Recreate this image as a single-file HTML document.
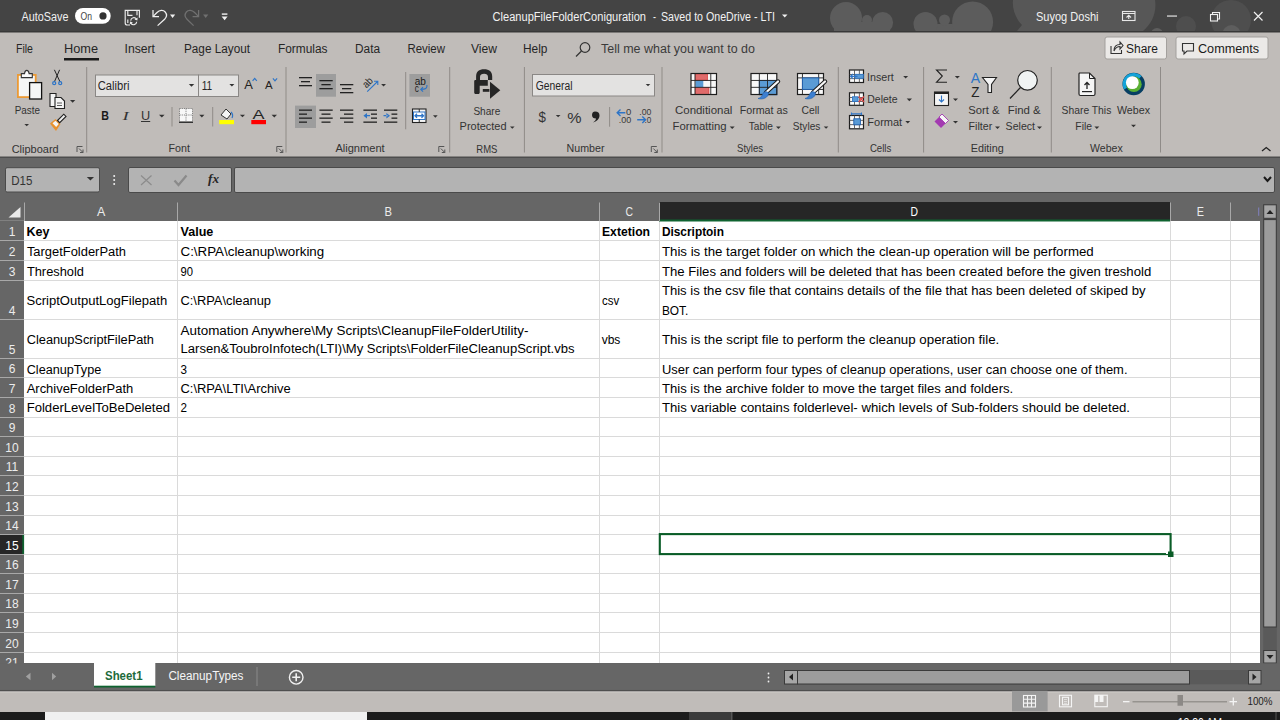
<!DOCTYPE html>
<html><head><meta charset="utf-8"><style>
html,body{margin:0;padding:0;width:1280px;height:720px;overflow:hidden;background:#666;}
svg{display:block;}
text{font-family:"Liberation Sans",sans-serif;white-space:pre;}
</style></head><body>
<svg width="1280" height="720" viewBox="0 0 1280 720" font-family="Liberation Sans, sans-serif">
<rect x="0" y="0" width="1280" height="32" fill="#444444"/>
<rect x="0" y="32" width="1280" height="125" fill="#c0bcb9"/>
<rect x="0" y="156.5" width="1280" height="1.5" fill="#4d4d4d"/>
<rect x="0" y="158" width="1280" height="505" fill="#666666"/>
<rect x="0" y="689.5" width="1280" height="2" fill="#4f4f4f"/>
<rect x="0" y="691.5" width="1280" height="20.5" fill="#c0bcb9"/>
<rect x="0" y="691.5" width="1280" height="1.3" fill="#c9c6c3"/>
<rect x="0" y="712" width="1280" height="8" fill="#1c1c1c"/>
<clipPath id="tb"><rect x="0" y="0" width="1280" height="31"/></clipPath>
<g clip-path="url(#tb)">
<g fill="#5c5c5c">
<circle cx="846" cy="18" r="16"/><circle cx="867" cy="20" r="5"/><circle cx="882.6" cy="22.5" r="10.5"/>
<rect x="834" y="22" width="56" height="10"/><rect x="918" y="24" width="70" height="8"/><circle cx="925.5" cy="24" r="12"/><circle cx="944.5" cy="20" r="5.5"/><circle cx="972.6" cy="22" r="20.5"/>
</g>
<path d="M1013 0 H1155 C1157 12 1152 24 1143 31 H1017 L1022 25 C1015 18 1012 8 1013 0 Z" fill="#575757"/>
<g fill="#4e4e4e"><circle cx="1186" cy="26" r="10"/><circle cx="1231" cy="20" r="20"/></g>
<g fill="#5e5e5e"><circle cx="1231.5" cy="34" r="9"/><circle cx="1157" cy="34" r="6"/></g>
</g>
<rect x="0" y="0" width="812" height="32" fill="#444444"/>
<rect x="0" y="31" width="1280" height="1.5" fill="#383838"/>
<text x="21.60" y="20.60" font-size="12" fill="#f0f0f0" font-weight="normal" textLength="46.90" lengthAdjust="spacingAndGlyphs">AutoSave</text>
<rect x="75" y="8" width="35.7" height="15.8" rx="7.9" fill="#ffffff"/>
<text x="80.50" y="19.80" font-size="10" fill="#444444" font-weight="normal" textLength="11.50" lengthAdjust="spacingAndGlyphs">On</text>
<circle cx="103" cy="15.9" r="3.6" fill="#333333"/>
<g fill="none" stroke="#ececec" stroke-width="1.15">
<path d="M139.4 17.8 V10.3 H125.2 V23 C125.2 24.2 126 25 127.2 25 H130"/>
<path d="M127.8 10.3 V15.3 H132.5 M137 10.3 V15.3"/>
<path d="M127.8 19.5 V23"/>
<path d="M130.7 20.6 A3.1 3.1 0 0 1 136.5 19.3 M136.7 21.8 A3.1 3.1 0 0 1 130.9 23.1"/>
</g>
<path d="M137.6 17.4 L137.4 20.4 L134.5 19.6 Z M129.8 24.6 L130 21.6 L132.9 22.4 Z" fill="#ececec"/>
<g fill="none" stroke="#f0f0f0" stroke-width="1.25" stroke-linejoin="miter">
<path d="M153 10 V16.5 H159"/>
<path d="M153.4 16.1 L157 12.5 C159.5 10 163.2 9.6 165.2 12 C167.2 14.5 166.6 17.2 164.6 19.2 L157.6 25.6"/>
</g>
<path d="M170 14.6 L175.2 14.6 L172.6 17.9 Z" fill="#f0f0f0"/>
<g fill="none" stroke="#707070" stroke-width="1.25">
<path d="M198.6 10 V16.5 H192.6"/>
<path d="M198.2 16.1 L194.6 12.5 C192.1 10 188.4 9.6 186.4 12 C184.4 14.5 185 17.2 187 19.2 L193.6 25.6"/>
</g>
<path d="M203.1 14.6 L208.3 14.6 L205.7 17.9 Z" fill="#707070"/>
<rect x="221.8" y="13.4" width="5.6" height="1.4" fill="#f0f0f0"/>
<path d="M221.6 16.6 L227.6 16.6 L224.6 20.2 Z" fill="#f0f0f0"/>
<text x="492.50" y="20.50" font-size="12.5" fill="#f2f2f2" font-weight="normal" textLength="153.50" lengthAdjust="spacingAndGlyphs">CleanupFileFolderConiguration</text>
<text x="653.00" y="20.50" font-size="12.5" fill="#f2f2f2" font-weight="normal" textLength="3.00" lengthAdjust="spacingAndGlyphs">-</text>
<text x="661.00" y="20.50" font-size="12.5" fill="#f2f2f2" font-weight="normal" textLength="114.00" lengthAdjust="spacingAndGlyphs">Saved to OneDrive - LTI</text>
<path d="M782 14.5 L787.5 14.5 L784.75 17.5 Z" fill="#f2f2f2"/>
<text x="1036.00" y="20.80" font-size="12.5" fill="#f2f2f2" font-weight="normal" textLength="62.50" lengthAdjust="spacingAndGlyphs">Suyog Doshi</text>
<g fill="none" stroke="#e8e8e8" stroke-width="1.1">
<rect x="1122.5" y="11.5" width="12.5" height="9"/>
<path d="M1122.5 13.5 H1135 M1128.75 19 V15.5 M1126.5 17.5 L1128.75 15.2 L1131 17.5"/>
</g>
<rect x="1167" y="15.5" width="10" height="1.1" fill="#f0f0f0"/>
<g fill="none" stroke="#f0f0f0" stroke-width="1.1"><rect x="1210.5" y="14.5" width="7" height="6.5"/><path d="M1212.5 14.5 V12.5 H1219.5 V19 H1217.5"/></g>
<path d="M1254 12 L1262.5 20.5 M1262.5 12 L1254 20.5" stroke="#f0f0f0" stroke-width="1.2"/>
<text x="16.00" y="53.00" font-size="12.5" fill="#262626" font-weight="normal" textLength="17.00" lengthAdjust="spacingAndGlyphs">File</text>
<text x="64.00" y="53.00" font-size="12.5" fill="#262626" font-weight="normal" textLength="34.00" lengthAdjust="spacingAndGlyphs">Home</text>
<rect x="64" y="58" width="35" height="2.5" fill="#1a1a1a"/>
<text x="124.50" y="53.00" font-size="12.5" fill="#262626" font-weight="normal" textLength="30.50" lengthAdjust="spacingAndGlyphs">Insert</text>
<text x="184.00" y="53.00" font-size="12.5" fill="#262626" font-weight="normal" textLength="66.00" lengthAdjust="spacingAndGlyphs">Page Layout</text>
<text x="278.00" y="53.00" font-size="12.5" fill="#262626" font-weight="normal" textLength="49.50" lengthAdjust="spacingAndGlyphs">Formulas</text>
<text x="355.00" y="53.00" font-size="12.5" fill="#262626" font-weight="normal" textLength="25.00" lengthAdjust="spacingAndGlyphs">Data</text>
<text x="407.50" y="53.00" font-size="12.5" fill="#262626" font-weight="normal" textLength="37.50" lengthAdjust="spacingAndGlyphs">Review</text>
<text x="471.00" y="53.00" font-size="12.5" fill="#262626" font-weight="normal" textLength="26.00" lengthAdjust="spacingAndGlyphs">View</text>
<text x="523.00" y="53.00" font-size="12.5" fill="#262626" font-weight="normal" textLength="24.50" lengthAdjust="spacingAndGlyphs">Help</text>
<g fill="none" stroke="#333" stroke-width="1.2"><circle cx="585" cy="47.5" r="4.8"/><path d="M581.5 51 L576 56.5"/></g>
<text x="601.00" y="53.00" font-size="12.5" fill="#3a3a3a" font-weight="normal" textLength="154.00" lengthAdjust="spacingAndGlyphs">Tell me what you want to do</text>
<rect x="1105" y="37" width="61.5" height="22" rx="2" fill="#ebe9e7" stroke="#a3a09d" stroke-width="1"/>
<rect x="1176" y="37" width="92" height="22" rx="2" fill="#ebe9e7" stroke="#a3a09d" stroke-width="1"/>
<g fill="none" stroke="#333" stroke-width="1.1"><path d="M1111 46 V53.5 H1121.5 V50"/><path d="M1114 51 C1114 46 1117 44.5 1120 44.5 V42 L1123 45.5 L1120 49 V46.5 C1118 46.5 1115.5 47.5 1114 51"/></g>
<text x="1126.00" y="53.00" font-size="12.5" fill="#1a1a1a" font-weight="normal" textLength="32.00" lengthAdjust="spacingAndGlyphs">Share</text>
<path d="M1182.5 43.5 H1193.5 V51 H1187 L1184 54 V51 H1182.5 Z" fill="none" stroke="#333" stroke-width="1.1"/>
<text x="1198.00" y="53.00" font-size="12.5" fill="#1a1a1a" font-weight="normal" textLength="61.00" lengthAdjust="spacingAndGlyphs">Comments</text>
<rect x="17.9" y="74.9" width="17.8" height="22.2" fill="#f5f6f6" stroke="#eb9a35" stroke-width="1.8"/>
<path d="M21.3 77.6 V73.6 H24.5 C24.8 71.2 25.9 70.4 26.8 70.4 C27.7 70.4 28.8 71.2 29.1 73.6 H32.3 V77.6 Z" fill="#fafafa" stroke="#333" stroke-width="1.1"/>
<rect x="29.6" y="82.6" width="12" height="16.4" fill="#f5f6f6" stroke="#111" stroke-width="1.3"/>
<text x="14.70" y="114.40" font-size="11.8" fill="#333333" font-weight="normal" textLength="25.30" lengthAdjust="spacingAndGlyphs">Paste</text>
<path d="M24.4 124 L29 124 L26.7 126.3 Z" fill="#333"/>
<g fill="none" stroke="#222" stroke-width="1"><path d="M54.4 69.8 L60 81.8 M59.6 69.8 L54.4 81.8"/></g>
<g fill="none" stroke="#2e75c7" stroke-width="1.3"><circle cx="54.2" cy="83.2" r="1.5"/><circle cx="60.2" cy="83.2" r="1.5"/></g>
<g fill="#f5f5f5" stroke="#222" stroke-width="1.1"><path d="M50 93.5 H56 V106.5 H50 Z"/><path d="M55 97.5 H61 L64.5 101 V108.5 H55 Z"/></g>
<path d="M57 103 H62 M57 105.5 H62" stroke="#333" stroke-width="0.8"/>
<path d="M70 100 L75.3 100 L72.65 102.65 Z" fill="#333"/>
<path d="M50 123.5 L55.5 119 L60.5 124 L56 131 Z" fill="#e8912d"/>
<path d="M52.5 123.2 L55.5 120.7 L58.7 123.9 L56.2 127 Z" fill="#f5f5f5"/>
<path d="M57.5 120.5 L63.8 114.2 L66 116.4 L59.7 122.7 Z" fill="#f0f0f0" stroke="#222" stroke-width="1.1"/>
<text x="11.70" y="152.70" font-size="11.3" fill="#333333" font-weight="normal" textLength="47.00" lengthAdjust="spacingAndGlyphs">Clipboard</text>
<g fill="none" stroke="#555" stroke-width="1"><path d="M77.0 152 V146.5 H82.5"/><path d="M79.0 148.5 L83.0 152.5 M83.0 149.5 V152.5 H80.0"/></g>
<rect x="86.2" y="67" width="1" height="85.5" fill="#8f8b88"/>
<rect x="95.5" y="75" width="103" height="21.5" fill="#e3e2e1" stroke="#8a8785" stroke-width="1"/>
<rect x="198.5" y="75" width="40" height="21.5" fill="#e3e2e1" stroke="#8a8785" stroke-width="1"/>
<text x="97.70" y="89.80" font-size="12.5" fill="#262626" font-weight="normal" textLength="31.70" lengthAdjust="spacingAndGlyphs">Calibri</text>
<path d="M188.8 84 L194.25 84 L191.525 86.725 Z" fill="#333"/>
<text x="201.75" y="89.80" font-size="12.5" fill="#262626" font-weight="normal" textLength="10.45" lengthAdjust="spacingAndGlyphs">11</text>
<path d="M229.4 84 L234.4 84 L231.9 86.5 Z" fill="#333"/>
<text x="244.20" y="89.00" font-size="13" fill="#222" font-weight="normal" textLength="8.60" lengthAdjust="spacingAndGlyphs">A</text>
<path d="M252.6 80.8 L254.7 78.4 L256.8 80.8" fill="none" stroke="#2e75c7" stroke-width="1.2"/>
<text x="265.00" y="89.00" font-size="11.5" fill="#222" font-weight="normal" textLength="7.60" lengthAdjust="spacingAndGlyphs">A</text>
<path d="M272.9 78.4 L275 80.8 L277.1 78.4" fill="none" stroke="#2e75c7" stroke-width="1.2"/>
<text x="101.30" y="120.00" font-size="12.5" fill="#1a1a1a" font-weight="bold" textLength="7.70" lengthAdjust="spacingAndGlyphs">B</text>
<text x="122.50" y="120.00" font-size="13" fill="#333" font-weight="normal" textLength="6.30" lengthAdjust="spacingAndGlyphs" style="font-family:'Liberation Serif',serif;font-style:italic">I</text>
<text x="141.00" y="120.00" font-size="12.5" fill="#333" font-weight="normal" textLength="9.20" lengthAdjust="spacingAndGlyphs">U</text>
<rect x="141" y="121" width="9.2" height="1" fill="#333"/>
<path d="M159 114.8 L164.6 114.8 L161.8 117.6 Z" fill="#333"/>
<rect x="171.5" y="107" width="1" height="19.5" fill="#8f8b88"/>
<rect x="179.5" y="108.5" width="13" height="13" fill="#f8f8f8"/>
<g stroke="#777" stroke-width="0.9" stroke-dasharray="1.2 1" fill="none"><path d="M179.5 108.5 H192.5 M179.5 108.5 V121.5 M192.5 108.5 V121.5 M179.5 115 H192.5 M186 108.5 V121.5"/></g>
<rect x="179" y="121.5" width="14" height="1.5" fill="#333"/>
<path d="M199.25 114.8 L204.4 114.8 L201.825 117.375 Z" fill="#333"/>
<rect x="212.2" y="107" width="1" height="19.5" fill="#8f8b88"/>
<path d="M221 115 L226 109 L231 114 L227 119 Z" fill="#f5f5f5" stroke="#333" stroke-width="1"/>
<path d="M231 112 C233 114 233 116 232 118" stroke="#2e75c7" stroke-width="1.2" fill="none"/>
<rect x="219.25" y="120" width="14.75" height="4.2" fill="#ffff00"/>
<path d="M239.9 114.8 L245 114.8 L242.45 117.35 Z" fill="#333"/>
<text x="252.50" y="118.50" font-size="13" fill="#262626" font-weight="normal" textLength="12.00" lengthAdjust="spacingAndGlyphs">A</text>
<rect x="251.3" y="120" width="14.7" height="4.2" fill="#ff0000"/>
<path d="M271.6 114.8 L277 114.8 L274.3 117.49999999999999 Z" fill="#333"/>
<text x="168.50" y="152.30" font-size="11.3" fill="#333333" font-weight="normal" textLength="21.40" lengthAdjust="spacingAndGlyphs">Font</text>
<g fill="none" stroke="#555" stroke-width="1"><path d="M276.8 152 V146.5 H282.3"/><path d="M278.8 148.5 L282.8 152.5 M282.8 149.5 V152.5 H279.8"/></g>
<rect x="285.5" y="67" width="1" height="85.5" fill="#8f8b88"/>
<rect x="316" y="74" width="20" height="22.7" fill="#9d9d9d"/>
<rect x="409.4" y="74" width="20.6" height="22.7" fill="#9d9d9d"/>
<rect x="295" y="105.6" width="21" height="22.4" fill="#9d9d9d"/>
<rect x="299" y="77" width="13" height="1.3" fill="#222"/>
<rect x="301" y="81" width="9" height="1.3" fill="#222"/>
<rect x="299" y="85" width="13" height="1.3" fill="#222"/>
<rect x="319.4" y="80" width="13.300000000000011" height="1.3" fill="#222"/>
<rect x="321.4" y="84" width="9.300000000000011" height="1.3" fill="#222"/>
<rect x="319.4" y="88" width="13.300000000000011" height="1.3" fill="#222"/>
<rect x="340" y="84" width="13.300000000000011" height="1.3" fill="#222"/>
<rect x="342" y="88" width="9.300000000000011" height="1.3" fill="#222"/>
<rect x="340" y="92" width="13.300000000000011" height="1.3" fill="#222"/>
<text x="366.5" y="88.5" font-size="10.5" fill="#222" textLength="10" lengthAdjust="spacingAndGlyphs" transform="rotate(-45 366.5 88.5)">ab</text>
<path d="M367.2 91.6 L377.8 81.25 M374 81.25 H377.8 V84.9" fill="none" stroke="#2e75c7" stroke-width="1.1"/>
<path d="M381.1 84 L386 84 L383.55 86.44999999999999 Z" fill="#333"/>
<rect x="405.2" y="72" width="1" height="57.30000000000001" fill="#8f8b88"/>
<text x="414.70" y="84.70" font-size="10.5" fill="#1a1a1a" font-weight="normal" textLength="11.20" lengthAdjust="spacingAndGlyphs">ab</text>
<text x="414.70" y="91.90" font-size="10.5" fill="#1a1a1a" font-weight="normal" textLength="4.05" lengthAdjust="spacingAndGlyphs">c</text>
<path d="M426.9 85 C427.5 88.5 425.5 89.4 420.8 89.4 M423 87.2 L420.8 89.4 L423 91.6" fill="none" stroke="#2e75c7" stroke-width="1.2"/>
<rect x="299" y="109.5" width="13" height="1.3" fill="#222"/>
<rect x="299" y="113.5" width="8" height="1.3" fill="#222"/>
<rect x="299" y="117.5" width="13" height="1.3" fill="#222"/>
<rect x="299" y="121.5" width="8" height="1.3" fill="#222"/>
<rect x="319.4" y="109.5" width="13.300000000000011" height="1.3" fill="#222"/>
<rect x="321.5" y="113.5" width="9.0" height="1.3" fill="#222"/>
<rect x="319.4" y="117.5" width="13.300000000000011" height="1.3" fill="#222"/>
<rect x="321.5" y="121.5" width="9.0" height="1.3" fill="#222"/>
<rect x="340" y="109.5" width="13.300000000000011" height="1.3" fill="#222"/>
<rect x="344" y="113.5" width="9.300000000000011" height="1.3" fill="#222"/>
<rect x="340" y="117.5" width="13.300000000000011" height="1.3" fill="#222"/>
<rect x="344" y="121.5" width="9.300000000000011" height="1.3" fill="#222"/>
<rect x="363.4" y="109.5" width="13.600000000000023" height="1.3" fill="#222"/>
<rect x="363.4" y="121.5" width="13.600000000000023" height="1.3" fill="#222"/>
<rect x="371" y="113.5" width="6" height="1.3" fill="#222"/>
<rect x="371" y="117.5" width="6" height="1.3" fill="#222"/>
<path d="M363.4 115.7 L367 113 V118.4 Z M366 115.1 H370 V116.3 H366 Z" fill="#2e75c7"/>
<rect x="384" y="109.5" width="13.300000000000011" height="1.3" fill="#222"/>
<rect x="384" y="121.5" width="13.300000000000011" height="1.3" fill="#222"/>
<rect x="391.5" y="113.5" width="5.800000000000011" height="1.3" fill="#222"/>
<rect x="391.5" y="117.5" width="5.800000000000011" height="1.3" fill="#222"/>
<path d="M390 115.7 L386.4 113 V118.4 Z M383.5 115.1 H387.5 V116.3 H383.5 Z" fill="#2e75c7"/>
<rect x="412.5" y="109" width="13.5" height="13.5" fill="#f5f5f5" stroke="#222" stroke-width="1.1"/>
<rect x="413.5" y="112" width="11.5" height="7.5" fill="#ffffff" stroke="#2e75c7" stroke-width="1"/>
<path d="M415 115.75 H423.5 M417 113.7 L415 115.75 L417 117.8 M421.5 113.7 L423.5 115.75 L421.5 117.8" fill="none" stroke="#2e75c7" stroke-width="1.3"/>
<path d="M419.25 109 V112 M419.25 119.5 V122.5" stroke="#222" stroke-width="0.9"/>
<path d="M433 115.3 L437.7 115.3 L435.35 117.64999999999999 Z" fill="#333"/>
<text x="335.40" y="152.30" font-size="11.3" fill="#333333" font-weight="normal" textLength="49.30" lengthAdjust="spacingAndGlyphs">Alignment</text>
<g fill="none" stroke="#555" stroke-width="1"><path d="M438.8 152 V146.5 H444.3"/><path d="M440.8 148.5 L444.8 152.5 M444.8 149.5 V152.5 H441.8"/></g>
<rect x="449.2" y="67" width="1" height="85.5" fill="#8f8b88"/>
<path d="M476.1 80.5 V76.5 C476.1 71.5 479 69.3 484.1 69.3 C489.2 69.3 492.2 71.5 492.2 76.5 V80 H488 V77 C488 74.8 486.5 73.7 484.1 73.7 C481.7 73.7 480 74.8 480 77 V80.5 Z" fill="#262626"/>
<path d="M474.2 81.5 C474.2 80.6 474.8 80.1 475.7 80.1 H487.8 V85.7 H479.7 V92.5 C479.7 93.4 479.2 94 478.3 94 H475.6 C474.8 94 474.2 93.4 474.2 92.5 Z" fill="#262626"/>
<rect x="482.8" y="89" width="7.5" height="2.8" fill="#262626"/>
<path d="M490 81.8 L500.3 90.3 L490 98.7 Z" fill="#262626" stroke="#c0bcb9" stroke-width="1.2" paint-order="stroke"/>
<text x="473.40" y="114.70" font-size="11.8" fill="#333333" font-weight="normal" textLength="26.90" lengthAdjust="spacingAndGlyphs">Share</text>
<text x="459.60" y="129.60" font-size="11.8" fill="#333333" font-weight="normal" textLength="46.90" lengthAdjust="spacingAndGlyphs">Protected</text>
<path d="M510 126.5 L514.6 126.5 L512.3 128.8 Z" fill="#333"/>
<text x="476.30" y="152.50" font-size="11.3" fill="#333333" font-weight="normal" textLength="21.10" lengthAdjust="spacingAndGlyphs">RMS</text>
<rect x="523.9" y="67" width="1" height="85.5" fill="#8f8b88"/>
<rect x="532.5" y="74.5" width="122" height="21.5" fill="#e3e2e1" stroke="#8a8785" stroke-width="1"/>
<text x="535.70" y="89.80" font-size="12.5" fill="#262626" font-weight="normal" textLength="36.80" lengthAdjust="spacingAndGlyphs">General</text>
<path d="M645.7 84 L650.3 84 L648.0 86.29999999999995 Z" fill="#333"/>
<text x="538.60" y="122.00" font-size="15" fill="#333" font-weight="normal" textLength="7.40" lengthAdjust="spacingAndGlyphs">$</text>
<path d="M555.8 115 L560.5 115 L558.15 117.35000000000002 Z" fill="#333"/>
<text x="567.30" y="122.50" font-size="15" fill="#333" font-weight="normal" textLength="14.30" lengthAdjust="spacingAndGlyphs">%</text>
<path d="M595 111.5 C598 111.5 599.5 113 599.5 115.5 C599.5 119 596.5 121.5 593 122.5 C595.5 120.5 596 119.5 596 118.5 C593.5 118.5 592 117.5 592 115 C592 112.5 593.5 111.5 595 111.5 Z" fill="#222"/>
<rect x="609.1" y="107" width="1" height="19.700000000000003" fill="#8f8b88"/>
<text x="626.00" y="115.40" font-size="9.8" fill="#3a3a3a" font-weight="normal" textLength="5.30" lengthAdjust="spacingAndGlyphs">0</text>
<text x="618.80" y="123.10" font-size="9.8" fill="#3a3a3a" font-weight="normal" textLength="12.50" lengthAdjust="spacingAndGlyphs">.00</text>
<path d="M617.5 112.8 H625.3 M620.5 109.6 L617.2 112.8 L620.5 116" fill="none" stroke="#2e75c7" stroke-width="1.4"/>
<text x="639.30" y="115.40" font-size="9.8" fill="#3a3a3a" font-weight="normal" textLength="12.10" lengthAdjust="spacingAndGlyphs">.00</text>
<text x="644.60" y="123.10" font-size="9.8" fill="#3a3a3a" font-weight="normal" textLength="6.80" lengthAdjust="spacingAndGlyphs">.0</text>
<path d="M637.2 119.7 H645.3 M642.3 116.5 L645.6 119.7 L642.3 122.9" fill="none" stroke="#2e75c7" stroke-width="1.4"/>
<text x="566.60" y="152.30" font-size="11.3" fill="#333333" font-weight="normal" textLength="37.90" lengthAdjust="spacingAndGlyphs">Number</text>
<g fill="none" stroke="#555" stroke-width="1"><path d="M651.3 152 V146.5 H656.8"/><path d="M653.3 148.5 L657.3 152.5 M657.3 149.5 V152.5 H654.3"/></g>
<rect x="661.5" y="67" width="1" height="85.5" fill="#8f8b88"/>
<rect x="691" y="73.5" width="25.5" height="21" fill="#f8f8f8"/>
<rect x="695.3" y="73.8" width="12.3" height="6.4" fill="#e06b6b" stroke="#d83a3a" stroke-width="0.7"/>
<rect x="695.3" y="87.6" width="13.7" height="6.9" fill="#e06b6b" stroke="#d83a3a" stroke-width="0.7"/>
<rect x="695.3" y="80.8" width="8" height="6.4" fill="#5a9bd5"/>
<rect x="694.55" y="73.5" width="0.9" height="21" fill="#222"/>
<rect x="710.3499999999999" y="73.5" width="0.9" height="21" fill="#222"/>
<rect x="691" y="79.95" width="25.5" height="0.9" fill="#222"/>
<rect x="691" y="86.85" width="25.5" height="0.9" fill="#222"/>
<rect x="691" y="73.5" width="25.5" height="21" fill="none" stroke="#1e1e1e" stroke-width="1.2"/>
<text x="675.00" y="114.30" font-size="11.8" fill="#333333" font-weight="normal" textLength="57.30" lengthAdjust="spacingAndGlyphs">Conditional</text>
<text x="672.50" y="129.60" font-size="11.8" fill="#333333" font-weight="normal" textLength="54.10" lengthAdjust="spacingAndGlyphs">Formatting</text>
<path d="M729.7 126.5 L734.7 126.5 L732.2 129.0 Z" fill="#333"/>
<rect x="751" y="73.5" width="25.8" height="21" fill="#f8f8f8"/>
<rect x="759.3" y="80.4" width="17.5" height="14.4" fill="#5a9bd5" stroke="#1f5fae" stroke-width="0.9"/>
<rect x="758.8499999999999" y="73.5" width="0.9" height="21" fill="#222"/>
<rect x="767.05" y="73.5" width="0.9" height="21" fill="#222"/>
<rect x="751" y="79.95" width="25.8" height="0.9" fill="#222"/>
<rect x="751" y="86.85" width="25.8" height="0.9" fill="#222"/>
<rect x="751" y="73.5" width="25.8" height="21" fill="none" stroke="#1e1e1e" stroke-width="1.2"/>
<path d="M778 81.5 L766 92.5" stroke="#1e1e1e" stroke-width="4.4" stroke-linecap="round"/>
<path d="M778 81.5 L766 92.5" stroke="#f8f8f8" stroke-width="2.3" stroke-linecap="round"/>
<path d="M767.5 92.0 C765 91.0 763 92.5 762.5 94.5 C762 96.5 760 98.0 758 98.5 C763 100.0 768.5 97.5 768.5 93.0 Z" fill="#3d7fd0" stroke="#1f5fae" stroke-width="0.6"/>
<text x="739.70" y="114.30" font-size="11.8" fill="#333333" font-weight="normal" textLength="48.10" lengthAdjust="spacingAndGlyphs">Format as</text>
<text x="748.75" y="129.60" font-size="11.8" fill="#333333" font-weight="normal" textLength="24.25" lengthAdjust="spacingAndGlyphs">Table</text>
<path d="M776 126.5 L780.8 126.5 L778.4 128.89999999999998 Z" fill="#333"/>
<rect x="797.5" y="73.5" width="26" height="21" fill="#f8f8f8"/>
<rect x="801.9499999999999" y="73.5" width="0.9" height="21" fill="#222"/>
<rect x="818.25" y="73.5" width="0.9" height="21" fill="#222"/>
<rect x="797.5" y="77.45" width="26" height="0.9" fill="#222"/>
<rect x="797.5" y="88.95" width="26" height="0.9" fill="#222"/>
<rect x="802.4" y="77.9" width="16.3" height="11.5" fill="#5a9bd5" stroke="#1f5fae" stroke-width="0.9"/>
<rect x="797.5" y="73.5" width="26" height="21" fill="none" stroke="#1e1e1e" stroke-width="1.2"/>
<path d="M825 81.5 L813 92.5" stroke="#1e1e1e" stroke-width="4.4" stroke-linecap="round"/>
<path d="M825 81.5 L813 92.5" stroke="#f8f8f8" stroke-width="2.3" stroke-linecap="round"/>
<path d="M814.5 92.0 C812 91.0 810 92.5 809.5 94.5 C809 96.5 807 98.0 805 98.5 C810 100.0 815.5 97.5 815.5 93.0 Z" fill="#3d7fd0" stroke="#1f5fae" stroke-width="0.6"/>
<text x="801.60" y="114.30" font-size="11.8" fill="#333333" font-weight="normal" textLength="17.80" lengthAdjust="spacingAndGlyphs">Cell</text>
<text x="792.80" y="129.60" font-size="11.8" fill="#333333" font-weight="normal" textLength="27.50" lengthAdjust="spacingAndGlyphs">Styles</text>
<path d="M823.75 126.5 L828.4 126.5 L826.075 128.825 Z" fill="#333"/>
<text x="737.00" y="152.30" font-size="11.3" fill="#333333" font-weight="normal" textLength="26.10" lengthAdjust="spacingAndGlyphs">Styles</text>
<rect x="837.8" y="67" width="1" height="85.5" fill="#8f8b88"/>
<rect x="849.5" y="70" width="14" height="12.5" fill="#fafafa" stroke="#1e1e1e" stroke-width="1.2"/>
<rect x="854.20" y="70" width="0.8" height="12.5" fill="#444"/>
<rect x="858.90" y="70" width="0.8" height="12.5" fill="#444"/>
<rect x="849.5" y="74" width="14" height="0.8" fill="#444"/>
<rect x="849.5" y="78.3" width="14" height="0.8" fill="#444"/>
<rect x="855" y="74.3" width="8.3" height="4" fill="#5a9bd5" stroke="#2e75c7" stroke-width="0.8"/>
<path d="M850.8 76.3 H857.5 M853 74 L850.6 76.3 L853 78.6" fill="none" stroke="#2e75c7" stroke-width="1.2"/>
<text x="867.00" y="80.90" font-size="11.8" fill="#333333" font-weight="normal" textLength="26.80" lengthAdjust="spacingAndGlyphs">Insert</text>
<path d="M903.2 76 L908.1 76 L905.6500000000001 78.44999999999999 Z" fill="#333"/>
<rect x="849.5" y="92.8" width="14" height="12.5" fill="#fafafa" stroke="#1e1e1e" stroke-width="1.2"/>
<rect x="854.20" y="92.8" width="0.8" height="12.5" fill="#444"/>
<rect x="858.90" y="92.8" width="0.8" height="12.5" fill="#444"/>
<rect x="849.5" y="97" width="14" height="0.8" fill="#444"/>
<rect x="849.5" y="101.2" width="14" height="0.8" fill="#444"/>
<rect x="852.5" y="96.8" width="5.5" height="4.7" fill="#5a9bd5" stroke="#2e75c7" stroke-width="0.9"/>
<path d="M858.7 96.5 L864 102 M864 96.5 L858.7 102" stroke="#e04848" stroke-width="1.2"/>
<text x="867.30" y="103.40" font-size="11.8" fill="#333333" font-weight="normal" textLength="30.30" lengthAdjust="spacingAndGlyphs">Delete</text>
<path d="M906.7 98.5 L912 98.5 L909.35 101.14999999999998 Z" fill="#333"/>
<rect x="849.5" y="115.5" width="14" height="13.3" fill="#fafafa" stroke="#1e1e1e" stroke-width="1.2"/>
<rect x="854.20" y="115.5" width="0.8" height="13.3" fill="#444"/>
<rect x="858.90" y="115.5" width="0.8" height="13.3" fill="#444"/>
<rect x="849.5" y="119.9" width="14" height="0.8" fill="#444"/>
<rect x="849.5" y="124.3" width="14" height="0.8" fill="#444"/>
<rect x="853.8" y="118.8" width="6.6" height="6" fill="#5a9bd5" stroke="#1f5fae" stroke-width="0.9"/>
<path d="M851.5 113.9 H861.5 M851.5 112.6 V115.2 M861.5 112.6 V115.2" fill="none" stroke="#2e75c7" stroke-width="1.1"/>
<text x="867.30" y="125.90" font-size="11.8" fill="#333333" font-weight="normal" textLength="34.90" lengthAdjust="spacingAndGlyphs">Format</text>
<path d="M905.3 121 L910.2 121 L907.75 123.45000000000005 Z" fill="#333"/>
<text x="869.90" y="152.30" font-size="11.3" fill="#333333" font-weight="normal" textLength="21.40" lengthAdjust="spacingAndGlyphs">Cells</text>
<rect x="923.1" y="67" width="1" height="85.5" fill="#8f8b88"/>
<path d="M947 70 H936.5 L942.3 76 L936.5 82.3 H947" fill="none" stroke="#222" stroke-width="1.1"/>
<path d="M954.8 76 L959.9 76 L957.3499999999999 78.55000000000001 Z" fill="#333"/>
<rect x="934.5" y="92" width="14" height="13.5" fill="#f5f5f5" stroke="#222" stroke-width="1.1"/>
<rect x="934.5" y="92" width="14" height="2" fill="#222"/>
<path d="M941.5 95.5 V102 M939 99.5 L941.5 102 L944 99.5" fill="none" stroke="#2e75c7" stroke-width="1.1"/>
<path d="M953 98.5 L958 98.5 L955.5 101.0 Z" fill="#333"/>
<path d="M934.5 121.5 L942 114 L948.5 120.5 L941 128 Z" fill="#a33ab1"/>
<path d="M939 117 L942 114 L948.5 120.5 L945.5 123.5 Z" fill="#f5f5f5" stroke="#a33ab1" stroke-width="0.9"/>
<path d="M953 121 L958 121 L955.5 123.5 Z" fill="#333"/>
<text x="970.80" y="83.00" font-size="15.5" fill="#2e75c7" font-weight="normal" textLength="9.40" lengthAdjust="spacingAndGlyphs">A</text>
<text x="971.30" y="96.70" font-size="15.5" fill="#222" font-weight="normal" textLength="8.20" lengthAdjust="spacingAndGlyphs">Z</text>
<path d="M982.5 77.5 H996.5 L991.5 84.5 V92.5 H988 V84.5 Z" fill="#f5f5f5" stroke="#222" stroke-width="1.1"/>
<text x="968.30" y="114.40" font-size="11.8" fill="#333333" font-weight="normal" textLength="31.30" lengthAdjust="spacingAndGlyphs">Sort &amp;</text>
<text x="968.60" y="129.80" font-size="11.8" fill="#333333" font-weight="normal" textLength="23.60" lengthAdjust="spacingAndGlyphs">Filter</text>
<path d="M995 126.5 L1000 126.5 L997.5 129.0 Z" fill="#333"/>
<circle cx="1027.5" cy="80.3" r="9.8" fill="#f0f3f3" stroke="#222" stroke-width="1.2"/>
<path d="M1020.5 87.5 L1010 98.5" stroke="#222" stroke-width="1.2"/>
<text x="1007.70" y="114.40" font-size="11.8" fill="#333333" font-weight="normal" textLength="33.00" lengthAdjust="spacingAndGlyphs">Find &amp;</text>
<text x="1005.60" y="129.80" font-size="11.8" fill="#333333" font-weight="normal" textLength="29.40" lengthAdjust="spacingAndGlyphs">Select</text>
<path d="M1037 126.5 L1042 126.5 L1039.5 129.0 Z" fill="#333"/>
<text x="970.70" y="152.30" font-size="11.3" fill="#333333" font-weight="normal" textLength="33.10" lengthAdjust="spacingAndGlyphs">Editing</text>
<rect x="1050.8" y="67" width="1" height="85.5" fill="#8f8b88"/>
<path d="M1079.5 73 H1089.5 L1095 78.5 V94 C1095 95 1094.5 95.5 1093.5 95.5 H1080.5 C1079.5 95.5 1079 95 1079 94 V74 C1079 73.5 1079.5 73 1079.5 73 Z" fill="#f5f5f5" stroke="#222" stroke-width="1.2"/>
<path d="M1089.5 73 V78.5 H1095" fill="none" stroke="#222" stroke-width="1"/>
<path d="M1087 89 V82.5 M1084.5 85 L1087 82.5 L1089.5 85" fill="none" stroke="#222" stroke-width="1.3"/>
<rect x="1082" y="91" width="10" height="1.2" fill="#222"/>
<text x="1061.60" y="114.40" font-size="11.8" fill="#333333" font-weight="normal" textLength="49.70" lengthAdjust="spacingAndGlyphs">Share This</text>
<text x="1075.30" y="129.80" font-size="11.8" fill="#333333" font-weight="normal" textLength="16.70" lengthAdjust="spacingAndGlyphs">File</text>
<path d="M1094.4 126.5 L1099.3 126.5 L1096.85 128.94999999999993 Z" fill="#333"/>
<circle cx="1133.7" cy="84" r="11.2" fill="#073f63"/>
<path d="M1124.0 89.6 A11.2 11.2 0 0 1 1141.6 76.1 L1139.1 78.6 A7.7 7.7 0 0 0 1127.0 87.85 Z" fill="#14a3d9"/>
<circle cx="1133.9" cy="84.2" r="7.8" fill="#5ab033"/>
<circle cx="1132.3" cy="82.6" r="6.4" fill="#ffffff"/>
<text x="1117.00" y="114.40" font-size="11.8" fill="#333333" font-weight="normal" textLength="33.00" lengthAdjust="spacingAndGlyphs">Webex</text>
<path d="M1131 124.7 L1136 124.7 L1133.5 127.2 Z" fill="#333"/>
<text x="1090.00" y="152.30" font-size="11.3" fill="#333333" font-weight="normal" textLength="32.70" lengthAdjust="spacingAndGlyphs">Webex</text>
<rect x="1160.0" y="67" width="1" height="85.5" fill="#8f8b88"/>
<path d="M1262 151 L1266.25 147.5 L1270.5 151" fill="none" stroke="#222" stroke-width="1.3"/>
<rect x="5.5" y="167.7" width="94" height="24.3" rx="1.5" fill="#b3b3b3" stroke="#4a4a4a" stroke-width="1"/>
<text x="11.25" y="185.00" font-size="12" fill="#333" font-weight="normal" textLength="21.25" lengthAdjust="spacingAndGlyphs">D15</text>
<path d="M86.8 177 L94 177 L90.4 180.6 Z" fill="#333"/>
<circle cx="114.2" cy="176" r="1" fill="#f0f0f0"/>
<circle cx="114.2" cy="180" r="1" fill="#f0f0f0"/>
<circle cx="114.2" cy="184" r="1" fill="#f0f0f0"/>
<rect x="128.5" y="167.5" width="103" height="25" rx="1.5" fill="#b3b3b3" stroke="#4a4a4a" stroke-width="1"/>
<path d="M141 175.5 L151.5 185 M151.5 175.5 L141 185" stroke="#8c8c8c" stroke-width="1.2"/>
<path d="M174.5 180.5 L178.5 185 L186.5 175.5" fill="none" stroke="#8a8a8a" stroke-width="2.2"/>
<text x="208.00" y="183.00" font-size="13" fill="#262626" font-weight="bold" textLength="11.00" lengthAdjust="spacingAndGlyphs" style="font-family:'Liberation Serif',serif;font-style:italic">fx</text>
<rect x="234.5" y="167.5" width="1040" height="25" rx="1.5" fill="#b3b3b3" stroke="#4a4a4a" stroke-width="1"/>
<path d="M1264 177 L1267.5 181 L1271 177" fill="none" stroke="#1a1a1a" stroke-width="2"/>
<rect x="24" y="221" width="1236" height="442" fill="#ffffff"/>
<rect x="24" y="240" width="1236" height="1" fill="#dadada"/>
<rect x="24" y="260" width="1236" height="1" fill="#dadada"/>
<rect x="24" y="280" width="1236" height="1" fill="#dadada"/>
<rect x="24" y="319" width="1236" height="1" fill="#dadada"/>
<rect x="24" y="358" width="1236" height="1" fill="#dadada"/>
<rect x="24" y="377" width="1236" height="1" fill="#dadada"/>
<rect x="24" y="397" width="1236" height="1" fill="#dadada"/>
<rect x="24" y="417" width="1236" height="1" fill="#dadada"/>
<rect x="24" y="436" width="1236" height="1" fill="#dadada"/>
<rect x="24" y="456" width="1236" height="1" fill="#dadada"/>
<rect x="24" y="475" width="1236" height="1" fill="#dadada"/>
<rect x="24" y="495" width="1236" height="1" fill="#dadada"/>
<rect x="24" y="515" width="1236" height="1" fill="#dadada"/>
<rect x="24" y="534" width="1236" height="1" fill="#dadada"/>
<rect x="24" y="554" width="1236" height="1" fill="#dadada"/>
<rect x="24" y="573" width="1236" height="1" fill="#dadada"/>
<rect x="24" y="593" width="1236" height="1" fill="#dadada"/>
<rect x="24" y="612" width="1236" height="1" fill="#dadada"/>
<rect x="24" y="632" width="1236" height="1" fill="#dadada"/>
<rect x="24" y="652" width="1236" height="1" fill="#dadada"/>
<rect x="24" y="671" width="1236" height="1" fill="#dadada"/>
<rect x="177" y="221" width="1" height="442" fill="#dadada"/>
<rect x="599" y="221" width="1" height="442" fill="#dadada"/>
<rect x="659" y="221" width="1" height="442" fill="#dadada"/>
<rect x="1170" y="221" width="1" height="442" fill="#dadada"/>
<rect x="1230" y="221" width="1" height="442" fill="#dadada"/>
<rect x="659" y="202" width="511" height="19" fill="#262626"/>
<rect x="659" y="219.5" width="511" height="2" fill="#0f6330"/>
<rect x="0" y="220.5" width="24" height="1" fill="#9a9a9a"/>
<rect x="24" y="202.5" width="1" height="18.5" fill="#a8a8a8"/>
<rect x="177" y="202.5" width="1" height="18.5" fill="#a8a8a8"/>
<rect x="599" y="202.5" width="1" height="18.5" fill="#a8a8a8"/>
<rect x="659" y="202.5" width="1" height="18.5" fill="#a8a8a8"/>
<rect x="1170" y="202.5" width="1" height="18.5" fill="#a8a8a8"/>
<rect x="1230" y="202.5" width="1" height="18.5" fill="#a8a8a8"/>
<path d="M8.5 217.5 L20.5 207 V217.5 Z" fill="#e8e8e8"/>
<text x="96.90" y="216.20" font-size="12" fill="#ececec" font-weight="normal" textLength="8.30" lengthAdjust="spacingAndGlyphs">A</text>
<text x="384.50" y="216.20" font-size="12" fill="#ececec" font-weight="normal" textLength="7.50" lengthAdjust="spacingAndGlyphs">B</text>
<text x="625.50" y="216.20" font-size="12" fill="#ececec" font-weight="normal" textLength="7.50" lengthAdjust="spacingAndGlyphs">C</text>
<text x="910.50" y="216.20" font-size="12" fill="#ffffff" font-weight="normal" textLength="7.50" lengthAdjust="spacingAndGlyphs">D</text>
<text x="1196.80" y="216.20" font-size="12" fill="#ececec" font-weight="normal" textLength="7.20" lengthAdjust="spacingAndGlyphs">E</text>
<rect x="1258.2" y="207.5" width="1" height="8.3" fill="#8080c0"/>
<rect x="0" y="221" width="24" height="442" fill="#666666"/>
<rect x="0" y="534" width="24" height="20" fill="#262626"/>
<rect x="22.3" y="534" width="1.8" height="20" fill="#0f6330"/>
<rect x="0" y="240" width="24" height="1" fill="#a8a8a8"/>
<rect x="0" y="260" width="24" height="1" fill="#a8a8a8"/>
<rect x="0" y="280" width="24" height="1" fill="#a8a8a8"/>
<rect x="0" y="319" width="24" height="1" fill="#a8a8a8"/>
<rect x="0" y="358" width="24" height="1" fill="#a8a8a8"/>
<rect x="0" y="377" width="24" height="1" fill="#a8a8a8"/>
<rect x="0" y="397" width="24" height="1" fill="#a8a8a8"/>
<rect x="0" y="417" width="24" height="1" fill="#a8a8a8"/>
<rect x="0" y="436" width="24" height="1" fill="#a8a8a8"/>
<rect x="0" y="456" width="24" height="1" fill="#a8a8a8"/>
<rect x="0" y="475" width="24" height="1" fill="#a8a8a8"/>
<rect x="0" y="495" width="24" height="1" fill="#a8a8a8"/>
<rect x="0" y="515" width="24" height="1" fill="#a8a8a8"/>
<rect x="0" y="534" width="24" height="1" fill="#a8a8a8"/>
<rect x="0" y="554" width="24" height="1" fill="#a8a8a8"/>
<rect x="0" y="573" width="24" height="1" fill="#a8a8a8"/>
<rect x="0" y="593" width="24" height="1" fill="#a8a8a8"/>
<rect x="0" y="612" width="24" height="1" fill="#a8a8a8"/>
<rect x="0" y="632" width="24" height="1" fill="#a8a8a8"/>
<rect x="0" y="652" width="24" height="1" fill="#a8a8a8"/>
<rect x="0" y="671" width="24" height="1" fill="#a8a8a8"/>
<text x="12" y="235.70" font-size="12" fill="#ececec" text-anchor="middle">1</text>
<text x="12" y="255.70" font-size="12" fill="#ececec" text-anchor="middle">2</text>
<text x="12" y="275.70" font-size="12" fill="#ececec" text-anchor="middle">3</text>
<text x="12" y="314.70" font-size="12" fill="#ececec" text-anchor="middle">4</text>
<text x="12" y="353.70" font-size="12" fill="#ececec" text-anchor="middle">5</text>
<text x="12" y="372.70" font-size="12" fill="#ececec" text-anchor="middle">6</text>
<text x="12" y="392.70" font-size="12" fill="#ececec" text-anchor="middle">7</text>
<text x="12" y="412.70" font-size="12" fill="#ececec" text-anchor="middle">8</text>
<text x="12" y="431.70" font-size="12" fill="#ececec" text-anchor="middle">9</text>
<text x="12" y="451.70" font-size="12" fill="#ececec" text-anchor="middle">10</text>
<text x="12" y="470.70" font-size="12" fill="#ececec" text-anchor="middle">11</text>
<text x="12" y="490.70" font-size="12" fill="#ececec" text-anchor="middle">12</text>
<text x="12" y="510.70" font-size="12" fill="#ececec" text-anchor="middle">13</text>
<text x="12" y="529.70" font-size="12" fill="#ececec" text-anchor="middle">14</text>
<text x="12" y="549.70" font-size="12" fill="#ffffff" text-anchor="middle">15</text>
<text x="12" y="568.70" font-size="12" fill="#ececec" text-anchor="middle">16</text>
<text x="12" y="588.70" font-size="12" fill="#ececec" text-anchor="middle">17</text>
<text x="12" y="607.70" font-size="12" fill="#ececec" text-anchor="middle">18</text>
<text x="12" y="627.70" font-size="12" fill="#ececec" text-anchor="middle">19</text>
<text x="12" y="647.70" font-size="12" fill="#ececec" text-anchor="middle">20</text>
<text x="12" y="666.70" font-size="12" fill="#ececec" text-anchor="middle">21</text>
<text x="26.50" y="236.40" font-size="12" fill="#000000" font-weight="bold" textLength="23.00" lengthAdjust="spacingAndGlyphs">Key</text>
<text x="180.50" y="236.40" font-size="12" fill="#000000" font-weight="bold" textLength="32.80" lengthAdjust="spacingAndGlyphs">Value</text>
<text x="602.00" y="236.40" font-size="12" fill="#000000" font-weight="bold" textLength="48.00" lengthAdjust="spacingAndGlyphs">Extetion</text>
<text x="661.90" y="236.40" font-size="12" fill="#000000" font-weight="bold" textLength="62.00" lengthAdjust="spacingAndGlyphs">Discriptoin</text>
<text x="26.90" y="256.10" font-size="12" fill="#000000" font-weight="normal" textLength="99.10" lengthAdjust="spacingAndGlyphs">TargetFolderPath</text>
<text x="180.50" y="256.10" font-size="12" fill="#000000" font-weight="normal" textLength="143.70" lengthAdjust="spacingAndGlyphs">C:\RPA\cleanup\working</text>
<text x="661.90" y="256.10" font-size="12" fill="#000000" font-weight="normal" textLength="431.85" lengthAdjust="spacingAndGlyphs">This is the target folder on which the clean-up operation will be performed</text>
<text x="26.90" y="275.70" font-size="12" fill="#000000" font-weight="normal" textLength="57.10" lengthAdjust="spacingAndGlyphs">Threshold</text>
<text x="180.50" y="275.70" font-size="12" fill="#000000" font-weight="normal" textLength="12.50" lengthAdjust="spacingAndGlyphs">90</text>
<text x="661.90" y="275.70" font-size="12" fill="#000000" font-weight="normal" textLength="489.35" lengthAdjust="spacingAndGlyphs">The Files and folders will be deleted that has been created before the given treshold</text>
<text x="26.50" y="305.10" font-size="12" fill="#000000" font-weight="normal" textLength="140.75" lengthAdjust="spacingAndGlyphs">ScriptOutputLogFilepath</text>
<text x="180.50" y="305.10" font-size="12" fill="#000000" font-weight="normal" textLength="90.50" lengthAdjust="spacingAndGlyphs">C:\RPA\cleanup</text>
<text x="602.00" y="305.10" font-size="12" fill="#000000" font-weight="normal" textLength="17.20" lengthAdjust="spacingAndGlyphs">csv</text>
<text x="661.90" y="295.10" font-size="12" fill="#000000" font-weight="normal" textLength="483.60" lengthAdjust="spacingAndGlyphs">This is the csv file that contains details of the file that has been deleted of skiped by</text>
<text x="661.90" y="314.60" font-size="12" fill="#000000" font-weight="normal" textLength="26.40" lengthAdjust="spacingAndGlyphs">BOT.</text>
<text x="26.70" y="344.30" font-size="12" fill="#000000" font-weight="normal" textLength="127.30" lengthAdjust="spacingAndGlyphs">CleanupScriptFilePath</text>
<text x="180.50" y="334.60" font-size="12" fill="#000000" font-weight="normal" textLength="347.90" lengthAdjust="spacingAndGlyphs">Automation Anywhere\My Scripts\CleanupFileFolderUtility-</text>
<text x="180.50" y="353.40" font-size="12" fill="#000000" font-weight="normal" textLength="394.00" lengthAdjust="spacingAndGlyphs">Larsen&amp;ToubroInfotech(LTI)\My Scripts\FolderFileCleanupScript.vbs</text>
<text x="601.70" y="344.30" font-size="12" fill="#000000" font-weight="normal" textLength="18.70" lengthAdjust="spacingAndGlyphs">vbs</text>
<text x="661.90" y="344.30" font-size="12" fill="#000000" font-weight="normal" textLength="337.35" lengthAdjust="spacingAndGlyphs">This is the script file to perform the cleanup operation file.</text>
<text x="26.70" y="373.75" font-size="12" fill="#000000" font-weight="normal" textLength="74.55" lengthAdjust="spacingAndGlyphs">CleanupType</text>
<text x="180.50" y="373.75" font-size="12" fill="#000000" font-weight="normal" textLength="6.50" lengthAdjust="spacingAndGlyphs">3</text>
<text x="661.90" y="373.75" font-size="12" fill="#000000" font-weight="normal" textLength="465.60" lengthAdjust="spacingAndGlyphs">User can perform four types of cleanup operations, user can choose one of them.</text>
<text x="26.70" y="393.00" font-size="12" fill="#000000" font-weight="normal" textLength="106.50" lengthAdjust="spacingAndGlyphs">ArchiveFolderPath</text>
<text x="180.50" y="393.00" font-size="12" fill="#000000" font-weight="normal" textLength="110.10" lengthAdjust="spacingAndGlyphs">C:\RPA\LTI\Archive</text>
<text x="661.90" y="393.00" font-size="12" fill="#000000" font-weight="normal" textLength="351.35" lengthAdjust="spacingAndGlyphs">This is the archive folder to move the target files and folders.</text>
<text x="26.70" y="412.40" font-size="12" fill="#000000" font-weight="normal" textLength="143.30" lengthAdjust="spacingAndGlyphs">FolderLevelToBeDeleted</text>
<text x="180.50" y="412.40" font-size="12" fill="#000000" font-weight="normal" textLength="6.50" lengthAdjust="spacingAndGlyphs">2</text>
<text x="661.90" y="412.40" font-size="12" fill="#000000" font-weight="normal" textLength="468.10" lengthAdjust="spacingAndGlyphs">This variable contains folderlevel- which levels of Sub-folders should be deleted.</text>
<rect x="659.8" y="534.1" width="510.8" height="20" fill="none" stroke="#0a5c27" stroke-width="2.1"/>
<rect x="1168" y="551.5" width="5.5" height="5.5" fill="#0a5c27"/>
<rect x="1166" y="549.5" width="2" height="4" fill="#ffffff"/>
<rect x="1166" y="553" width="2" height="1" fill="#ffffff"/>
<rect x="1263.2" y="204.3" width="13.6" height="458.7" fill="#5a5a5a"/>
<rect x="1263.7" y="204.8" width="12.6" height="13.5" fill="#a6a6a6" stroke="#3a3a3a" stroke-width="1"/>
<path d="M1266.5 214 L1273.5 214 L1270 210 Z" fill="#222"/>
<rect x="1263.7" y="219.6" width="12.6" height="407.4" fill="#9c9c9c" stroke="#3a3a3a" stroke-width="1"/>
<rect x="1263.7" y="650.5" width="12.6" height="12.5" fill="#a6a6a6" stroke="#3a3a3a" stroke-width="1"/>
<path d="M1266.5 655 L1273.5 655 L1270 659 Z" fill="#222"/>
<rect x="0" y="663.4" width="1280" height="26.5" fill="#666666"/>
<path d="M25.8 676.5 L30.5 672.8 V680.3 Z" fill="#a0a0a0"/>
<path d="M56.2 676.5 L52 672.8 V680.3 Z" fill="#a0a0a0"/>
<rect x="94" y="663" width="61.3" height="23" fill="#ffffff"/>
<rect x="94" y="685.7" width="61.3" height="1.8" fill="#0f6330"/>
<text x="105.00" y="680.40" font-size="12.5" fill="#1d6b3a" font-weight="bold" textLength="37.50" lengthAdjust="spacingAndGlyphs">Sheet1</text>
<text x="168.40" y="680.40" font-size="12.5" fill="#f6f6f6" font-weight="normal" textLength="75.10" lengthAdjust="spacingAndGlyphs">CleanupTypes</text>
<rect x="256.5" y="667" width="1" height="19" fill="#8a8a8a"/>
<circle cx="296.2" cy="677.3" r="6.8" fill="none" stroke="#f0f0f0" stroke-width="1.4"/>
<path d="M292.2 677.3 H300.2 M296.2 673.3 V681.3" stroke="#f0f0f0" stroke-width="1.6"/>
<circle cx="768.5" cy="673.5" r="0.9" fill="#f0f0f0"/>
<circle cx="768.5" cy="677.5" r="0.9" fill="#f0f0f0"/>
<circle cx="768.5" cy="681.5" r="0.9" fill="#f0f0f0"/>
<rect x="784" y="670" width="477" height="14.3" fill="#5a5a5a"/>
<rect x="784.5" y="670.5" width="13" height="13.5" fill="#a6a6a6" stroke="#3a3a3a" stroke-width="1"/>
<path d="M793 673.5 V680.5 L789 677 Z" fill="#222"/>
<rect x="797.5" y="670.5" width="392" height="13.5" fill="#9c9c9c" stroke="#3a3a3a" stroke-width="1"/>
<rect x="1248.5" y="670.5" width="12.5" height="13.5" fill="#a6a6a6" stroke="#3a3a3a" stroke-width="1"/>
<path d="M1252.5 673.5 V680.5 L1256.5 677 Z" fill="#222"/>
<rect x="1012" y="690.8" width="35.6" height="20.6" fill="#999999"/>
<g fill="none" stroke="#f4f4f4" stroke-width="1.1"><rect x="1023.5" y="695.5" width="12" height="11.5"/><path d="M1027.5 695.5 V707 M1031.5 695.5 V707 M1023.5 699.3 H1035.5 M1023.5 703.1 H1035.5"/></g>
<g fill="none" stroke="#f4f4f4" stroke-width="1.1"><rect x="1059.5" y="695.3" width="12" height="11.5"/><rect x="1062.5" y="697.3" width="6" height="7.5"/><path d="M1064 699.5 H1067 M1064 701.5 H1067 M1064 703.3 H1067" stroke-width="0.6"/></g>
<g fill="none" stroke="#f4f4f4" stroke-width="1.1"><rect x="1094.8" y="695.2" width="12.5" height="11.5"/></g>
<g fill="#f4f4f4"><rect x="1095" y="695" width="3.2" height="7"/><rect x="1099.5" y="695" width="4" height="7"/></g>
<rect x="1123" y="701" width="6.5" height="1.3" fill="#f4f4f4"/>
<rect x="1132.5" y="701.2" width="94.5" height="1.2" fill="#8c8986"/>
<rect x="1177.5" y="695" width="5.5" height="10.75" fill="#8c8986"/>
<rect x="1229.5" y="701" width="7.5" height="1.3" fill="#f4f4f4"/>
<rect x="1232.65" y="697.5" width="1.3" height="8" fill="#f4f4f4"/>
<text x="1247.50" y="704.50" font-size="11" fill="#222" font-weight="normal" textLength="25.00" lengthAdjust="spacingAndGlyphs">100%</text>
<rect x="45" y="712" width="322" height="8" fill="#f0f0f0"/>
<rect x="689" y="712" width="42" height="8" fill="#3b3b3b"/>
<rect x="731" y="712" width="1.5" height="8" fill="#555"/>
<rect x="1275.5" y="712" width="1" height="8" fill="#555"/>
<text x="1177.70" y="726.50" font-size="12" fill="#ffffff" font-weight="normal" textLength="44.30" lengthAdjust="spacingAndGlyphs">12:30 AM</text>
</svg>
</body></html>
